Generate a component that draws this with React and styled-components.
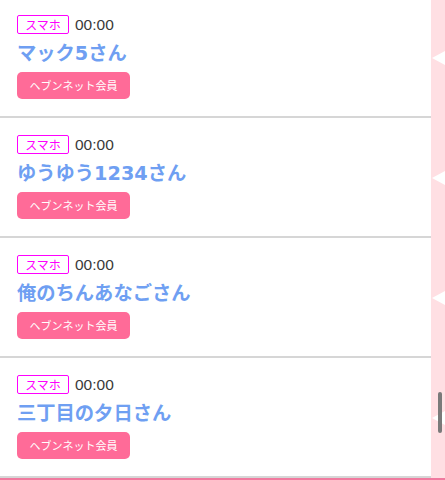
import styled, { createGlobalStyle } from "styled-components";

const GlobalStyle = createGlobalStyle`
  html, body {
    margin: 0;
    padding: 0;
    background: #fff;
    overflow: hidden;
  }
  body {
    font-family: "Liberation Sans", "Noto Sans CJK JP", sans-serif;
  }
`;

const members = [
  { id: 1, name: "マック5さん" },
  { id: 2, name: "ゆうゆう1234さん" },
  { id: 3, name: "俺のちんあなごさん" },
  { id: 4, name: "三丁目の夕日さん" },
];

function App() {
  return (
    <>
      <GlobalStyle />
      <Page>
        <Main>
          <List>
            {members.map((m) => (
              <Row key={m.id}>
                <Meta>
                  <DeviceTag>スマホ</DeviceTag>
                  <Time>00:00</Time>
                </Meta>
                <Name>{m.name}</Name>
                <MemberButton>ヘブンネット会員</MemberButton>
              </Row>
            ))}
          </List>
          <Strip>
            {members.map((m) => (
              <StripCell key={m.id}>
                <Arrow />
              </StripCell>
            ))}
            <Thumb />
          </Strip>
        </Main>
        <BottomLine />
      </Page>
    </>
  );
}

const Page = styled.div`
  width: 445px;
  height: 480px;
  display: flex;
  flex-direction: column;
  overflow: hidden;
`;

const Main = styled.div`
  display: flex;
  height: 478px;
  overflow: hidden;
`;

const List = styled.div`
  width: 431px;
  margin-top: -2px;
`;

const Row = styled.div`
  box-sizing: border-box;
  height: 120px;
  padding: 17px 17px 0;
  border-bottom: 2px solid #d6d6d6;
  display: flex;
  flex-direction: column;
  align-items: flex-start;
`;

const Meta = styled.div`
  display: flex;
  align-items: center;
  gap: 6px;
  height: 19px;
`;

const DeviceTag = styled.span`
  box-sizing: border-box;
  height: 19px;
  width: 52px;
  border: 1px solid #ff00ff;
  border-radius: 2px;
  color: #ff00ff;
  font-family: "Noto Sans CJK JP", sans-serif;
  font-size: 12px;
  line-height: 17px;
  text-align: center;
`;

const Time = styled.span`
  color: #3a3a3a;
  font-size: 15.5px;
  line-height: 19px;
`;

const Name = styled.div`
  margin-top: 6px;
  color: #6f9ff2;
  font-family: "DejaVu Sans", "Noto Sans CJK JP", sans-serif;
  font-size: 19.3px;
  font-weight: bold;
  line-height: 27px;
`;

const MemberButton = styled.div`
  margin-top: 5px;
  box-sizing: border-box;
  width: 113px;
  height: 27px;
  border-radius: 5px;
  background: #ff6b98;
  color: #fff;
  font-family: "Noto Sans CJK JP", sans-serif;
  font-size: 11px;
  line-height: 27px;
  text-align: center;
`;

const Strip = styled.div`
  position: relative;
  width: 14px;
  background: #ffdfe3;
  margin-top: -2px;
`;

const StripCell = styled.div`
  height: 120px;
  display: flex;
  align-items: center;
  justify-content: flex-end;
`;

const Arrow = styled.div`
  width: 0;
  height: 0;
  border-top: 7px solid transparent;
  border-bottom: 7px solid transparent;
  border-right: 13px solid #fff;
`;

const Thumb = styled.div`
  position: absolute;
  left: 7px;
  top: 394px;
  width: 4px;
  height: 41px;
  border-radius: 2px;
  background: #7a7a7a;
`;

const BottomLine = styled.div`
  height: 2px;
  background: #f07a9f;
`;

export default App;
